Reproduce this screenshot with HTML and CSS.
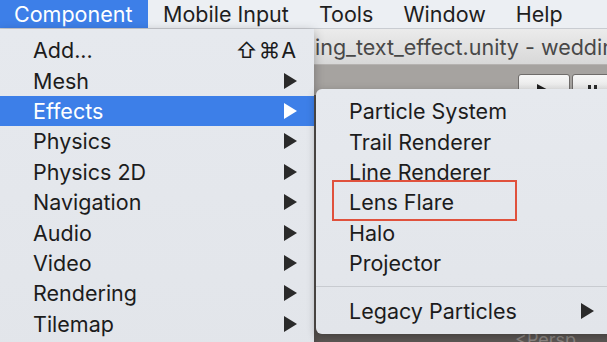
FILE: index.html
```html
<!DOCTYPE html>
<html lang="en">
<head>
    <meta charset="UTF-8">
    <title>Component menu</title>
    <link rel="stylesheet" href="styles.css">
</head>
<body>

    <!-- Top menu bar -->
    <div class="menubar">
        <div class="menubar-item active">Component</div>
        <div class="menubar-item">Mobile Input</div>
        <div class="menubar-item">Tools</div>
        <div class="menubar-item">Window</div>
        <div class="menubar-item">Help</div>
    </div>

    <div class="stage">
        <!-- Editor window behind the menus -->
        <div class="window">
            <div class="titlebar">
                <span class="title">ing_text_effect.unity - wedding</span>
            </div>
            <div class="toolbar">
                <div class="play-buttons">
                    <div class="btn play"><span class="tri"></span></div>
                    <div class="btn pause"><span class="bar"></span><span class="bar"></span></div>
                </div>
            </div>
            <div class="scene">
                <span class="persp">&lt;Persp</span>
            </div>
        </div>

        <!-- Component dropdown -->
        <div class="menu main-menu">
            <div class="menu-row"><span>Add...</span><span class="shortcut">⇧⌘A</span></div>
            <div class="menu-row"><span>Mesh</span><span class="arrow"></span></div>
            <div class="menu-row selected"><span>Effects</span><span class="arrow"></span></div>
            <div class="menu-row"><span>Physics</span><span class="arrow"></span></div>
            <div class="menu-row"><span>Physics 2D</span><span class="arrow"></span></div>
            <div class="menu-row"><span>Navigation</span><span class="arrow"></span></div>
            <div class="menu-row"><span>Audio</span><span class="arrow"></span></div>
            <div class="menu-row"><span>Video</span><span class="arrow"></span></div>
            <div class="menu-row"><span>Rendering</span><span class="arrow"></span></div>
            <div class="menu-row"><span>Tilemap</span><span class="arrow"></span></div>
        </div>

        <!-- Effects submenu -->
        <div class="menu sub-menu">
            <div class="menu-row"><span>Particle System</span></div>
            <div class="menu-row"><span>Trail Renderer</span></div>
            <div class="menu-row"><span>Line Renderer</span></div>
            <div class="menu-row"><span>Lens Flare</span></div>
            <div class="menu-row"><span>Halo</span></div>
            <div class="menu-row"><span>Projector</span></div>
            <div class="separator"></div>
            <div class="menu-row"><span>Legacy Particles</span><span class="arrow"></span></div>
        </div>

        <!-- Highlight box around Lens Flare -->
        <div class="highlight-box"></div>
    </div>

</body>
</html>
```

FILE: styles.css
```css
body {
    margin: 0;
    width: 607px;
    height: 342px;
    overflow: hidden;
    font-family: 'Inter', 'Liberation Sans', sans-serif;
    font-size: 21.5px;
    color: #1c1c1c;
    background: #a5a19e;
    display: flex;
    flex-direction: column;
}

.menubar {
    height: 29px;
    display: flex;
    align-items: center;
    background: #eceff3;
    border-bottom: 1px solid #c9ccd1;
    box-sizing: border-box;
}

.menubar-item {
    height: 100%;
    display: flex;
    align-items: center;
    padding: 0 15px 0 15px;
    color: #1e1e1e;
    white-space: nowrap;
}

.menubar-item.active {
    background: #3d7fe8;
    color: #ffffff;
    padding-left: 14px;
    width: 119px;
}

.stage {
    position: relative;
    flex-grow: 1;
}

.window {
    height: 100%;
    display: flex;
    flex-direction: column;
}

.titlebar {
    height: 35px;
    display: flex;
    align-items: center;
    padding-left: 315px;
    background: linear-gradient(#ebebeb, #d8d8d8);
    border-bottom: 1px solid #b5b2b0;
}

.title {
    color: #484848;
    white-space: nowrap;
}

.toolbar {
    height: 30px;
    background: #a6a3a0;
    position: relative;
}

.play-buttons {
    position: absolute;
    left: 518px;
    top: 9px;
    display: flex;
    gap: 2px;
}

.btn {
    height: 22px;
    background: linear-gradient(#f6f6f6, #e2e2e2);
    border: 1px solid #6f6c6a;
    border-radius: 3px 3px 0 0;
    display: flex;
    align-items: flex-start;
    justify-content: center;
    padding-top: 9px;
    box-sizing: border-box;
}

.btn.play {
    width: 52px;
}

.btn.pause {
    width: 40px;
    gap: 3px;
    padding-top: 10px;
}

.tri {
    width: 0;
    height: 0;
    border-top: 8px solid transparent;
    border-bottom: 8px solid transparent;
    border-left: 15px solid #1e1e1e;
}

.bar {
    width: 3px;
    height: 10px;
    background: #2a2a2a;
}

.scene {
    flex-grow: 1;
    background: #5e5956;
    position: relative;
}

.persp {
    position: absolute;
    left: 515px;
    bottom: -8px;
    color: #8f8a86;
    font-size: 18px;
}

.menu {
    position: absolute;
    background: linear-gradient(#e6e9ee, #e2e5ea);
    box-shadow: 0 3px 10px rgba(0, 0, 0, 0.3);
}

.main-menu {
    left: 0;
    top: 0;
    width: 314px;
    height: 330px;
    padding-top: 6px;
    box-sizing: border-box;
}

.sub-menu {
    left: 316px;
    top: 60px;
    width: 300px;
    height: 245px;
    padding-top: 7px;
    box-sizing: border-box;
    border-radius: 6px 0 0 6px;
}

.menu-row {
    height: 30.4px;
    display: flex;
    align-items: center;
    justify-content: space-between;
    padding: 0 17px 0 33px;
    white-space: nowrap;
}

.sub-menu .menu-row {
    padding-left: 33px;
    padding-right: 22px;
}

.menu-row.selected {
    background: #3d7fe8;
    color: #ffffff;
}

.shortcut {
    letter-spacing: 1px;
}

.arrow {
    width: 0;
    height: 0;
    border-top: 8px solid transparent;
    border-bottom: 8px solid transparent;
    border-left: 13px solid #2a2a2a;
}

.selected .arrow {
    border-left-color: #ffffff;
}

.separator {
    height: 1px;
    background: #c8cbd0;
    margin: 8px 0 8px;
}

.highlight-box {
    position: absolute;
    left: 332px;
    top: 151px;
    width: 181px;
    height: 37px;
    border: 2px solid #e0513c;
}
```
